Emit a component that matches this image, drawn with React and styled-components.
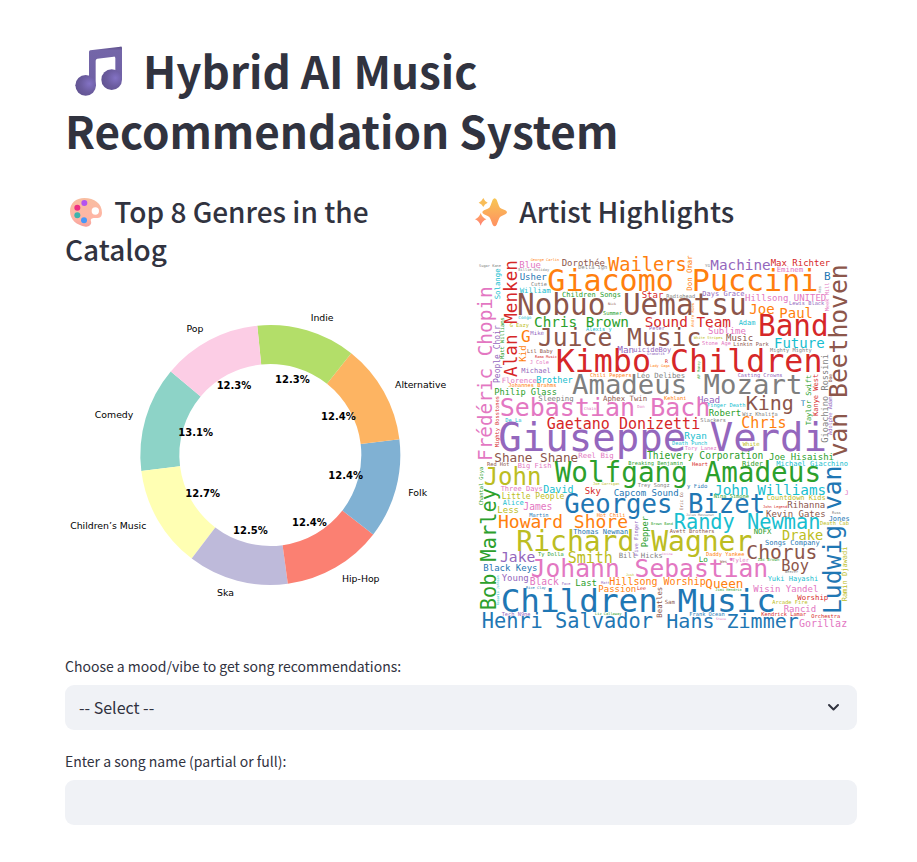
import React from "react";
import styled, { createGlobalStyle } from "styled-components";

const GlobalStyle = createGlobalStyle`
  *, *::before, *::after { box-sizing: border-box; }
  body {
    margin: 0;
    background: #ffffff;
    color: #31333f;
    font-family: "Noto Sans CJK SC", "Open Sans", sans-serif;
  }
`;

const Page = styled.main`
  padding: 40px 60px 37px 65px;
`;

const Title = styled.h1`
  margin: 0 0 32px;
  font-size: 44px;
  line-height: 60px;
  font-weight: 700;
`;

const Columns = styled.section`
  display: grid;
  grid-template-columns: 1fr 1fr;
  gap: 18px;
`;

const Column = styled.div`
  min-width: 0;
`;

const Heading = styled.h3`
  margin: 0;
  font-size: 28px;
  line-height: 38px;
  font-weight: 500;
`;

const Emoji = styled.svg`
  display: inline-block;
  overflow: visible;
  width: ${(p) => p.$width}px;
  height: ${(p) => p.$height}px;
  margin: 0 ${(p) => p.$after}px 0 ${(p) => p.$before}px;
  vertical-align: ${(p) => p.$drop}px;
`;

const Chart = styled.svg`
  display: block;
  width: 100%;
  height: auto;
  margin-top: ${(p) => p.$top}px;
`;

const SliceLabel = styled.text`
  font-family: "DejaVu Sans", sans-serif;
  font-size: 28px;
  fill: #000000;
`;

const SlicePercent = styled(SliceLabel)`
  font-size: 30px;
  font-weight: 700;
`;

const Word = styled.text`
  font-family: "DejaVu Sans Mono", monospace;
  white-space: pre;
`;

const Form = styled.form`
  display: flex;
  flex-direction: column;
  gap: 19px;
  margin-top: 17px;
`;

const Field = styled.div`
  display: flex;
  flex-direction: column;
  gap: 7px;
`;

const Label = styled.label`
  font-size: 14px;
  line-height: 24px;
`;

const SelectBox = styled.div`
  position: relative;
`;

const control = `
  display: block;
  width: 100%;
  height: 45px;
  border: 0;
  border-radius: 9px;
  padding: 0 14px 2px;
  background: #f0f2f6;
  color: #31333f;
  font-family: inherit;
  font-size: 16px;
  outline: none;
`;

const Select = styled.select`
  ${control}
  appearance: none;
`;

const Input = styled.input`
  ${control}
`;

const Chevron = styled.svg`
  position: absolute;
  right: 17px;
  top: 17px;
  width: 13px;
  height: 11px;
  pointer-events: none;
`;

const slices = [
  { name: "Comedy", value: 13.1, color: "#8dd3c7" },
  { name: "Children’s Music", value: 12.7, color: "#ffffb3" },
  { name: "Ska", value: 12.5, color: "#bebada" },
  { name: "Hip-Hop", value: 12.4, color: "#fb8072" },
  { name: "Folk", value: 12.4, color: "#80b1d3" },
  { name: "Alternative", value: 12.4, color: "#fdb462" },
  { name: "Indie", value: 12.3, color: "#b3de69" },
  { name: "Pop", value: 12.3, color: "#fccde5" },
];

const CENTER = { x: 616, y: 465 };
const RADIUS = 390;
const HOLE = 273;

function polar(angle, radius) {
  const rad = (angle * Math.PI) / 180;
  return { x: CENTER.x + radius * Math.cos(rad), y: CENTER.y - radius * Math.sin(rad) };
}

function wedge(from, to) {
  const a = polar(from, RADIUS);
  const b = polar(to, RADIUS);
  const c = polar(to, HOLE);
  const d = polar(from, HOLE);
  return `M${a.x} ${a.y}A${RADIUS} ${RADIUS} 0 0 0 ${b.x} ${b.y}L${c.x} ${c.y}A${HOLE} ${HOLE} 0 0 1 ${d.x} ${d.y}Z`;
}

function GenreDonut() {
  const total = slices.reduce((sum, s) => sum + s.value, 0);
  let angle = 140;
  const parts = slices.map((s) => {
    const from = angle;
    angle += (s.value / total) * 360;
    return { ...s, from, to: angle, mid: (from + angle) / 2 };
  });
  return (
    <Chart $top={32} viewBox="0 0 1161 930" role="img" aria-label="Top 8 genres">
      {parts.map((p) => (
        <path key={p.name} d={wedge(p.from, p.to)} fill={p.color} />
      ))}
      {parts.map((p) => {
        const out = polar(p.mid, RADIUS * 1.1);
        const inner = polar(p.mid, RADIUS * 0.6);
        return (
          <g key={p.name}>
            <SliceLabel
              x={Math.round(out.x)}
              y={Math.round(out.y) + 9}
              textAnchor={out.x > CENTER.x ? "start" : "end"}
            >
              {p.name}
            </SliceLabel>
            <SlicePercent x={Math.round(inner.x)} y={Math.round(inner.y) + 10} textAnchor="middle">
              {p.value.toFixed(1)}%
            </SlicePercent>
          </g>
        );
      })}
    </Chart>
  );
}

const palette = {
  blue: "#1f77b4",
  orange: "#ff7f0e",
  green: "#2ca02c",
  red: "#d62728",
  purple: "#9467bd",
  brown: "#8c564b",
  pink: "#e377c2",
  gray: "#7f7f7f",
  olive: "#bcbd22",
  cyan: "#17becf",
};

// text, left edge, right edge, baseline, colour
const across = [
  ["George Carlin", 182, 266, 31, "orange"],
  ["Sugar Kane", 27, 91, 49, "gray"],
  ["Blue", 149, 210, 53, "pink"],
  ["Dorothée", 276, 402, 46, "brown"],
  ["Wailers", 416, 647, 63, "orange"],
  ["Billie Holiday", 145, 235, 63, "gray"],
  ["Della ign", 325, 411, 57, "gray"],
  ["Usher", 150, 228, 90, "blue"],
  ["Cutie", 183, 229, 106, "gray"],
  ["Giacomo Puccini", 236, 1040, 121, "orange"],
  ["William", 149, 238, 129, "cyan"],
  ["Children Songs", 276, 452, 139, "green"],
  ["Star", 516, 577, 144, "red"],
  ["Radiohead", 589, 675, 144, "gray"],
  ["Nobuo Uematsu", 145, 822, 195, "brown"],
  ["Nick", 414, 438, 164, "brown"],
  ["Summer", 399, 455, 194, "green"],
  ["Congo", 145, 184, 206, "cyan"],
  ["Chris Brown", 194, 471, 230, "green"],
  ["Sound Team", 526, 779, 230, "red"],
  ["G Eazy", 119, 175, 230, "olive"],
  ["Alexis y", 348, 424, 242, "cyan"],
  ["Peter", 537, 582, 240, "purple"],
  ["G", 155, 178, 276, "orange"],
  ["Mike", 181, 219, 254, "purple"],
  ["Juice Music", 207, 688, 288, "brown"],
  ["Lil Baby", 171, 248, 309, "brown"],
  ["Man", 443, 490, 308, "purple"],
  ["uicideBoy", 490, 602, 306, "purple"],
  ["Gramatik", 531, 583, 315, "purple"],
  ["Rama Music", 195, 259, 322, "red"],
  ["J Cole", 179, 235, 341, "pink"],
  ["Kimbo Children", 262, 1055, 365, "red"],
  ["Lady Gaga", 540, 597, 350, "orange"],
  ["R", 585, 592, 338, "red"],
  ["Michael", 154, 242, 369, "purple"],
  ["Machine", 723, 900, 60, "purple"],
  ["Max Richter", 903, 1076, 48, "red"],
  ["YG", 705, 718, 49, "gray"],
  ["Eminem", 920, 996, 65, "pink"],
  ["B", 1063, 1079, 90, "blue"],
  ["Days Grace", 697, 823, 137, "purple"],
  ["Hillsong UNITED", 826, 1066, 151, "pink"],
  ["Lewis Black", 957, 1061, 164, "purple"],
  ["Joe", 840, 910, 192, "orange"],
  ["Paul", 930, 1026, 203, "orange"],
  ["Band", 868, 1070, 258, "red"],
  ["Adam", 806, 855, 224, "cyan"],
  ["Sublime", 715, 825, 250, "pink"],
  ["White Stripes", 672, 756, 267, "olive"],
  ["Music", 769, 847, 273, "brown"],
  ["Stone Age", 696, 781, 284, "pink"],
  ["Linkin Park", 790, 895, 288, "brown"],
  ["Future", 914, 1060, 294, "cyan"],
  ["Mighty Mighty", 900, 1024, 306, "gray"],
  ["Casting Crowns", 803, 936, 380, "purple"],
  ["Chili Peppers", 360, 484, 380, "orange"],
  ["Léo Delibes", 500, 640, 382, "gray"],
  ["Florence", 95, 196, 399, "pink"],
  ["Brother", 200, 308, 398, "cyan"],
  ["Johannes Brahms", 115, 257, 411, "orange"],
  ["Amadeus Mozart", 310, 995, 432, "gray"],
  ["Philip Glass", 74, 262, 434, "green"],
  ["Sleeping", 205, 306, 453, "gray"],
  ["Aphex Twin", 399, 526, 452, "brown"],
  ["Kehlani", 582, 647, 448, "orange"],
  ["Head", 684, 747, 457, "purple"],
  ["Finger Death", 711, 826, 470, "cyan"],
  ["T", 992, 1003, 468, "blue"],
  ["Sebastian Bach", 93, 713, 498, "pink"],
  ["Chain", 342, 376, 480, "pink"],
  ["Don", 502, 523, 472, "pink"],
  ["King", 830, 968, 480, "brown"],
  ["Robert", 717, 810, 498, "green"],
  ["Wiz Khalifa", 817, 922, 496, "gray"],
  ["Slackers", 691, 766, 516, "gray"],
  ["De La", 106, 153, 514, "cyan"],
  ["Gaetano Donizetti", 232, 690, 535, "red"],
  ["Chris", 816, 946, 533, "orange"],
  ["Giuseppe Verdi", 91, 1066, 602, "purple"],
  ["Ryan", 644, 707, 567, "cyan"],
  ["Death Punch", 606, 711, 585, "cyan"],
  ["White", 818, 868, 587, "olive"],
  ["Tory Lanez", 644, 739, 599, "pink"],
  ["Shane Shane", 74, 318, 636, "brown"],
  ["Reel Big", 325, 426, 624, "pink"],
  ["Thievery Corporation", 532, 881, 627, "green"],
  ["Joe Hisaishi", 898, 1087, 630, "green"],
  ["Red Hot", 51, 117, 647, "brown"],
  ["Big Fish", 143, 243, 654, "pink"],
  ["Breaking Benjamin", 475, 640, 643, "green"],
  ["Heart", 666, 713, 647, "red"],
  ["Rider", 816, 877, 646, "green"],
  ["Michael Giacchino", 919, 1135, 647, "cyan"],
  ["Wolfgang Amadeus", 258, 1043, 696, "green"],
  ["John", 44, 208, 704, "olive"],
  ["Joe Garrigan", 369, 446, 705, "olive"],
  ["Trey Songz", 503, 598, 709, "gray"],
  ["Three Days", 92, 216, 721, "pink"],
  ["David", 221, 307, 729, "cyan"],
  ["Sky", 345, 391, 731, "red"],
  ["y Fido", 651, 709, 712, "blue"],
  ["John Williams", 734, 1062, 733, "cyan"],
  ["J", 1124, 1133, 735, "pink"],
  ["Little People", 95, 279, 747, "olive"],
  ["Capcom Sound", 432, 621, 738, "blue"],
  ["Nina Simone", 731, 836, 743, "green"],
  ["Countdown Kids", 890, 1067, 749, "olive"],
  ["Alice", 98, 160, 765, "cyan"],
  ["Less", 83, 145, 787, "olive"],
  ["James", 161, 246, 779, "pink"],
  ["Georges Bizet", 287, 880, 788, "blue"],
  ["Martin", 178, 235, 800, "blue"],
  ["Hot Chili", 380, 467, 800, "orange"],
  ["Howard Shore", 86, 467, 833, "orange"],
  ["Thomas Newman", 310, 474, 851, "blue"],
  ["Brown Band", 543, 609, 824, "green"],
  ["Jules Massenet", 648, 733, 797, "gray"],
  ["John Legend", 879, 948, 772, "red"],
  ["Rihanna", 953, 1065, 773, "brown"],
  ["Kevin Gates", 889, 1063, 799, "brown"],
  ["Russ", 1086, 1111, 792, "gray"],
  ["Jones", 1076, 1137, 812, "blue"],
  ["Death Cab", 1050, 1137, 824, "olive"],
  ["Randy Newman", 614, 1048, 836, "cyan"],
  ["Richard Wagner", 143, 845, 902, "olive"],
  ["Avett Brothers", 599, 735, 849, "brown"],
  ["NOFX", 851, 901, 852, "green"],
  ["Drake", 937, 1055, 869, "olive"],
  ["Songs Company", 885, 1050, 884, "blue"],
  ["Jake", 92, 193, 936, "purple"],
  ["Ty Dolla", 204, 280, 918, "green"],
  ["Smith", 295, 426, 938, "olive"],
  ["Bill Hicks", 446, 574, 923, "gray"],
  ["Cocina", 575, 606, 915, "pink"],
  ["Daddy Yankee", 708, 822, 917, "orange"],
  ["Chorus", 832, 1038, 925, "brown"],
  ["Black Keys", 41, 199, 961, "blue"],
  ["Johann Sebastian", 185, 889, 980, "pink"],
  ["Lo", 686, 711, 936, "green"],
  ["Wes", 750, 771, 938, "brown"],
  ["*Tyler", 776, 834, 934, "pink"],
  ["Zac Brown", 863, 924, 933, "green"],
  ["Boy", 936, 1014, 961, "brown"],
  ["Weezer", 945, 983, 969, "gray"],
  ["Young", 96, 174, 992, "purple"],
  ["Black", 180, 265, 1003, "pink"],
  ["Face", 275, 300, 1004, "purple"],
  ["Last", 317, 378, 1008, "green"],
  ["Matt", 393, 418, 1000, "purple"],
  ["Josh", 468, 492, 977, "olive"],
  ["Hillsong Worship", 419, 700, 1005, "orange"],
  ["Queen", 707, 817, 1013, "orange"],
  ["Rice Clay", 168, 225, 1015, "blue"],
  ["Passion", 386, 495, 1025, "orange"],
  ["Lee", 501, 527, 1018, "red"],
  ["Yuki Hayashi", 893, 1044, 993, "cyan"],
  ["Wisin Yandel", 851, 1041, 1025, "pink"],
  ["Jimi Hendrix", 736, 811, 1023, "green"],
  ["Children Music", 97, 915, 1085, "blue"],
  ["Worship", 982, 1071, 1050, "red"],
  ["Sam", 584, 612, 1060, "brown"],
  ["Arcade Fire", 907, 1011, 1061, "olive"],
  ["Rancid", 942, 1037, 1085, "pink"],
  ["Tech N9ne", 95, 180, 1098, "purple"],
  ["Liz Callaway", 375, 451, 1094, "green"],
  ["Frank Ocean", 658, 763, 1097, "blue"],
  ["Steve", 738, 768, 1108, "pink"],
  ["Kendrick Lamar", 874, 1007, 1098, "red"],
  ["Orchestra", 1024, 1110, 1103, "red"],
  ["Henri Salvador", 38, 544, 1134, "blue"],
  ["Hans Zimmer", 592, 985, 1134, "blue"],
  ["Gorillaz", 988, 1127, 1130, "pink"],
];

// text, bottom edge, top edge, baseline, colour
const upward = [
  ["Frédéric Chopin", 630, 113, 66, "pink"],
  ["Alan Menken", 378, 31, 142, "red"],
  ["Solange", 147, 58, 91, "cyan"],
  ["People Choir", 398, 228, 91, "purple"],
  ["Matt Williams", 326, 203, 103, "green"],
  ["Kid", 333, 288, 167, "orange"],
  ["Don Omar", 121, 20, 666, "orange"],
  ["Meek Mill", 183, 97, 1078, "pink"],
  ["Kes", 127, 108, 1052, "gray"],
  ["Andre Rieu", 230, 160, 673, "orange"],
  ["van Beethoven", 618, 45, 1130, "brown"],
  ["Mighty Bosstones", 591, 438, 86, "red"],
  ["Chantal Goya", 765, 652, 40, "green"],
  ["AP Money", 385, 335, 690, "green"],
  ["Taylor Swift", 525, 376, 1024, "green"],
  ["Kanye West", 497, 372, 1045, "red"],
  ["Gioachino Rossini", 576, 308, 1073, "gray"],
  ["Adolphe Adam", 554, 440, 1086, "purple"],
  ["Doe", 396, 372, 1086, "brown"],
  ["Bob Marley", 1077, 718, 78, "green"],
  ["Ludwig van", 1088, 653, 1114, "blue"],
  ["Five Finger", 917, 813, 505, "purple"],
  ["Pepper", 890, 798, 533, "green"],
  ["Rosario Johnson", 1065, 975, 88, "cyan"],
  ["Beatles", 1102, 1012, 576, "brown"],
  ["Ramin Djawadi", 1053, 889, 1132, "olive"],
  ["Eric Co", 780, 728, 638, "brown"],
];

// A monospace glyph advances 0.602em and leaves about 0.06em free on each side.
function sizeFor(text, length) {
  return Math.round(length / (0.602 * text.length - 0.12));
}

function bearing(size) {
  return Math.round(size * 0.06);
}

function WordCloud() {
  return (
    <Chart $top={20} viewBox="0 0 1161 1161" role="img" aria-label="Artist word cloud">
      {across.map(([text, left, right, base, color]) => {
        const size = sizeFor(text, right - left);
        return (
          <Word key={text + left} x={left - bearing(size) + 1} y={base + 1} fontSize={size} fill={palette[color]}>
            {text}
          </Word>
        );
      })}
      {upward.map(([text, bottom, top, base, color]) => {
        const size = sizeFor(text, bottom - top);
        return (
          <Word
            key={text}
            transform={`translate(${base} ${bottom + bearing(size)}) rotate(-90)`}
            fontSize={size}
            fill={palette[color]}
          >
            {text}
          </Word>
        );
      })}
    </Chart>
  );
}

function NotesEmoji() {
  return (
    <Emoji $width={48} $height={50} $before={10} $after={10} $drop={-7} viewBox="0 0 144 150" aria-hidden="true">
      <defs>
        <radialGradient id="noteHead" cx="0.68" cy="0.42" r="0.75">
          <stop offset="0" stopColor="#8372c4" />
          <stop offset="0.55" stopColor="#6b5c9f" />
          <stop offset="1" stopColor="#60528f" />
        </radialGradient>
        <linearGradient id="noteBeam" x1="0" y1="0" x2="0" y2="1">
          <stop offset="0" stopColor="#5d4f89" />
          <stop offset="0.1" stopColor="#7466a8" />
          <stop offset="1" stopColor="#6f60a5" />
        </linearGradient>
      </defs>
      <path d="M42 18Q42 14 46 13L136 2Q141 1 141 6V101H121V37Q121 31 116 32L67 38Q62 39 62 44V118H42Z" fill="url(#noteBeam)" />
      <circle cx="32" cy="118" r="31" fill="url(#noteHead)" />
      <circle cx="110" cy="101" r="31" fill="url(#noteHead)" />
    </Emoji>
  );
}

function PaletteEmoji() {
  return (
    <Emoji $width={32} $height={29} $before={5} $after={6} $drop={-4} viewBox="0 0 96 87" aria-hidden="true">
      <defs>
        <linearGradient id="board" x1="0" y1="0" x2="0" y2="1">
          <stop offset="0" stopColor="#f8bda0" />
          <stop offset="0.7" stopColor="#ffb5a5" />
          <stop offset="1" stopColor="#f4a09c" />
        </linearGradient>
      </defs>
      <path
        fillRule="evenodd"
        d="M43 0C73 0 96 17 96 44C96 57 88 61 78 60C68 59 60 61 63 70C66 80 57 87 47 86C20 82 0 66 0 40C0 15 18 0 43 0ZM76 28A11 11 0 1 0 76 50A11 11 0 1 0 76 28Z"
        fill="url(#board)"
      />
      <circle cx="43" cy="15" r="9" fill="#b453f0" />
      <circle cx="22" cy="29" r="9" fill="#ed2f83" />
      <circle cx="22" cy="52" r="9" fill="#3db4ad" />
      <circle cx="42" cy="67" r="9" fill="#4698f8" />
    </Emoji>
  );
}

function SparklesEmoji() {
  return (
    <Emoji $width={32} $height={29} $before={5} $after={6} $drop={-4} viewBox="0 0 96 87" aria-hidden="true">
      <defs>
        <linearGradient id="spark" x1="0" y1="0" x2="0" y2="1">
          <stop offset="0" stopColor="#f7c753" />
          <stop offset="1" stopColor="#ff9061" />
        </linearGradient>
        <linearGradient id="sparkLow" x1="0" y1="0" x2="0" y2="1">
          <stop offset="0" stopColor="#ffad63" />
          <stop offset="1" stopColor="#ff7e72" />
        </linearGradient>
      </defs>
      <path d="M53 5Q59 -4 65 5L72 24Q74 30 80 32L91 37Q101 43 91 49L80 54Q74 56 72 62L65 80Q59 90 53 80L46 62Q44 56 38 54L27 49Q17 43 27 37L38 32Q44 30 46 24Z" fill="url(#spark)" />
      <path d="M25 0Q28 9 38 14Q28 18 25 27Q21 18 11 14Q21 9 25 0Z" fill="#f8bd58" />
      <path d="M17 45Q21 58 34 64Q21 69 17 83Q13 69 0 64Q13 58 17 45Z" fill="url(#sparkLow)" />
    </Emoji>
  );
}

export default function App() {
  return (
    <>
      <GlobalStyle />
      <Page>
        <Title>
          <NotesEmoji /> Hybrid AI Music Recommendation System
        </Title>
        <Columns>
          <Column>
            <Heading>
              <PaletteEmoji /> Top 8 Genres in the Catalog
            </Heading>
            <GenreDonut />
          </Column>
          <Column>
            <Heading>
              <SparklesEmoji /> Artist Highlights
            </Heading>
            <WordCloud />
          </Column>
        </Columns>
        <Form onSubmit={(e) => e.preventDefault()}>
          <Field>
            <Label htmlFor="mood">Choose a mood/vibe to get song recommendations:</Label>
            <SelectBox>
              <Select id="mood" defaultValue="">
                <option value="">-- Select --</option>
              </Select>
              <Chevron viewBox="0 0 13 11" aria-hidden="true">
                <path d="M2 3L6.5 7.5L11 3" fill="none" stroke="#31333f" strokeWidth="2" strokeLinecap="round" strokeLinejoin="round" />
              </Chevron>
            </SelectBox>
          </Field>
          <Field>
            <Label htmlFor="song">Enter a song name (partial or full):</Label>
            <Input id="song" type="text" />
          </Field>
        </Form>
      </Page>
    </>
  );
}
